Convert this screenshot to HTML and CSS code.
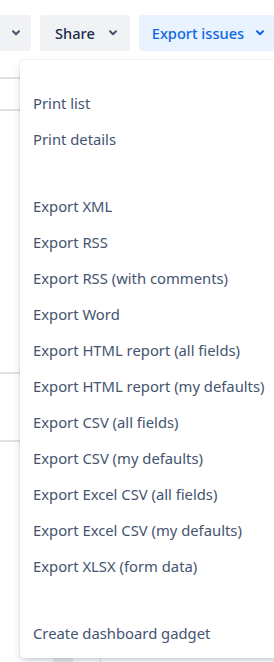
FILE: index.html
```html
<!DOCTYPE html>
<html lang="en">
<head>
    <meta charset="UTF-8">
    <meta name="viewport" content="width=device-width, initial-scale=1.0">
    <title>Export issues</title>
    <link rel="stylesheet" href="styles.css">
</head>
<body>
    <div class="page">
        <div class="toolbar">
            <button class="tool-btn cut-btn">
                <svg class="chev" viewBox="0 0 8 6"><path d="M1 1.2 4 4.2 7 1.2"/></svg>
            </button>
            <button class="tool-btn">
                <span>Share</span>
                <svg class="chev" viewBox="0 0 8 6"><path d="M1 1.2 4 4.2 7 1.2"/></svg>
            </button>
            <button class="tool-btn export-btn">
                <span>Export issues</span>
                <svg class="chev" viewBox="0 0 8 6"><path d="M1 1.2 4 4.2 7 1.2"/></svg>
            </button>
        </div>

        <div class="issues">
            <div class="row row-a"></div>
            <div class="row row-b"></div>
            <div class="row row-c"></div>
            <div class="row row-d"></div>
            <div class="row-foot">
                <span class="foot-box"></span>
                <span class="foot-line"></span>
            </div>
        </div>

        <div class="menu">
            <div class="menu-group">
                <a class="menu-item">Print list</a>
                <a class="menu-item">Print details</a>
            </div>
            <div class="menu-group">
                <a class="menu-item">Export XML</a>
                <a class="menu-item">Export RSS</a>
                <a class="menu-item">Export RSS (with comments)</a>
                <a class="menu-item">Export Word</a>
                <a class="menu-item">Export HTML report (all fields)</a>
                <a class="menu-item">Export HTML report (my defaults)</a>
                <a class="menu-item">Export CSV (all fields)</a>
                <a class="menu-item">Export CSV (my defaults)</a>
                <a class="menu-item">Export Excel CSV (all fields)</a>
                <a class="menu-item">Export Excel CSV (my defaults)</a>
                <a class="menu-item">Export XLSX (form data)</a>
            </div>
            <div class="menu-group">
                <a class="menu-item">Create dashboard gadget</a>
            </div>
        </div>
    </div>
</body>
</html>
```

FILE: styles.css
```css
body {
    margin: 0;
    background: #fff;
    font-family: "Noto Sans", "Open Sans", sans-serif;
    overflow: hidden;
}

.page {
    position: relative;
    height: 662px;
    overflow: hidden;
}

.toolbar {
    display: flex;
    gap: 9px;
    padding-top: 15px;
    margin-left: -29px;
    width: 400px;
}

.tool-btn {
    display: flex;
    align-items: center;
    gap: 14px;
    height: 36px;
    padding: 0 13px 0 15px;
    border: none;
    border-radius: 3px;
    background: #F1F2F4;
    color: #172B4D;
    font-family: inherit;
    font-size: 14.6px;
    font-weight: 500;
    flex-shrink: 0;
}

.cut-btn {
    width: 60px;
    justify-content: flex-end;
    padding-right: 11px;
}

.export-btn {
    background: #E9F2FF;
    color: #0C66E4;
    padding-left: 13px;
    padding-right: 14px;
    gap: 12px;
}

.chev {
    width: 8px;
    height: 6px;
    fill: none;
    stroke: currentColor;
    stroke-width: 2;
    stroke-linecap: round;
    stroke-linejoin: round;
}

.tool-btn:not(.export-btn) .chev {
    stroke: #44546F;
}

.issues {
    display: flex;
    flex-direction: column;
}

.row {
    border-bottom: 2px solid #DFE1E6;
}

.row-a { height: 26px; }
.row-b { height: 30px; }
.row-c { height: 261px; }
.row-d { height: 66px; }

.row-foot {
    display: flex;
    margin-top: 215px;
    height: 10px;
}

.foot-box {
    margin-left: 53px;
    width: 20px;
    background: #EBECF0;
}

.foot-line {
    margin-left: 27px;
    width: 1px;
    background: #DFE1E6;
}

.menu {
    position: absolute;
    left: 20px;
    top: 60px;
    width: 280px;
    height: 598px;
    box-sizing: border-box;
    padding: 25px 0 6px;
    background: #fff;
    border-radius: 4px;
    box-shadow: 0 4px 8px -2px rgba(9, 30, 66, 0.25), 0 0 1px rgba(9, 30, 66, 0.31);
}

.menu-group + .menu-group {
    margin-top: 31px;
}

.menu-item {
    display: flex;
    align-items: center;
    height: 36px;
    padding-left: 13px;
    font-size: 14.8px;
    color: #44546F;
    white-space: nowrap;
}
```
